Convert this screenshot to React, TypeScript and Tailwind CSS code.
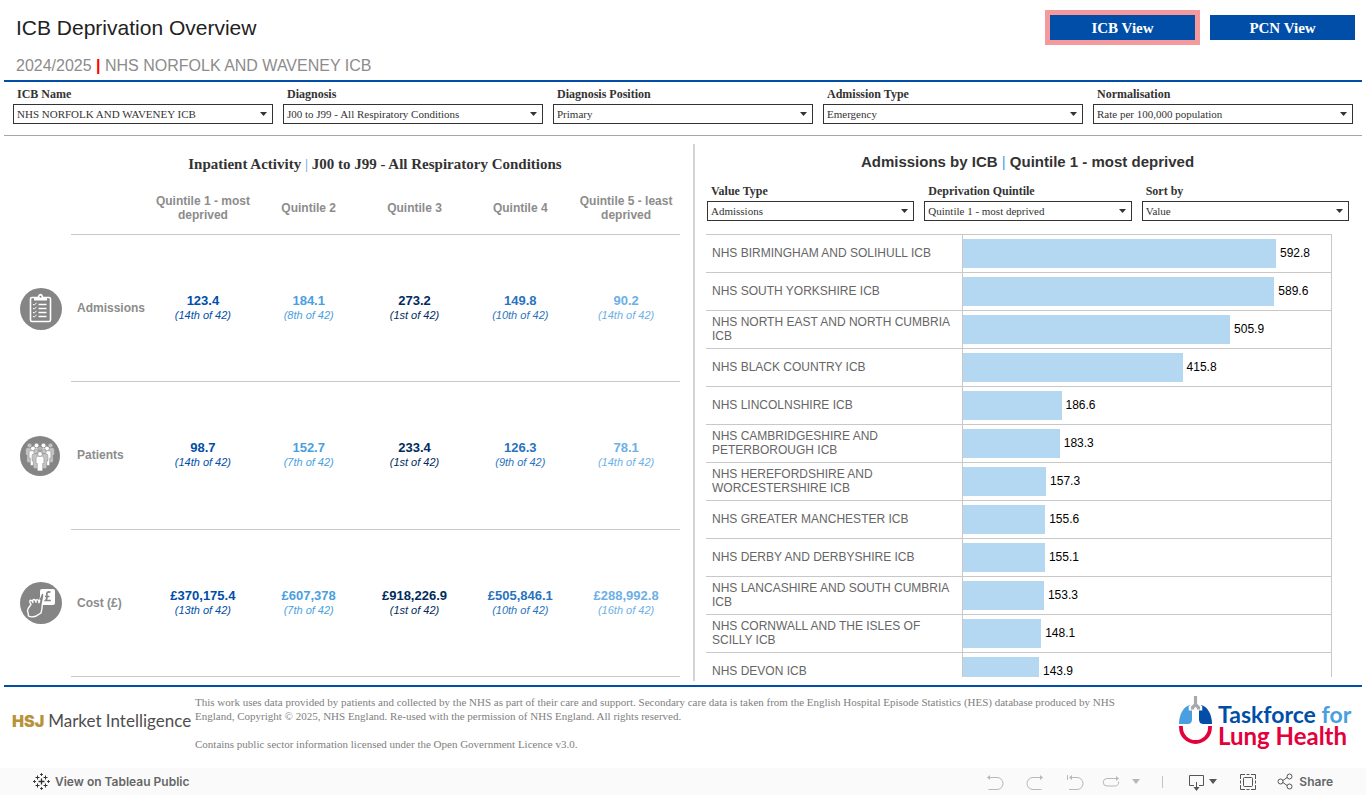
import type { ReactNode } from "react";

const filters = [
  { id: "icb", label: "ICB Name", value: "NHS NORFOLK AND WAVENEY ICB" },
  { id: "diagnosis", label: "Diagnosis", value: "J00 to J99 - All Respiratory Conditions" },
  { id: "position", label: "Diagnosis Position", value: "Primary" },
  { id: "admission", label: "Admission Type", value: "Emergency" },
  { id: "normalisation", label: "Normalisation", value: "Rate per 100,000 population" },
];

const chartFilters = [
  { id: "value-type", label: "Value Type", value: "Admissions" },
  { id: "quintile", label: "Deprivation Quintile", value: "Quintile 1 - most deprived" },
  { id: "sort", label: "Sort by", value: "Value" },
];

const quintiles = [
  "Quintile 1 - most deprived",
  "Quintile 2",
  "Quintile 3",
  "Quintile 4",
  "Quintile 5 - least deprived",
];

const quintileColors = [
  "text-[#004ea8]",
  "text-[#4a9fe0]",
  "text-[#002b5c]",
  "text-[#2a73c0]",
  "text-[#6cb0e6]",
];

const bars = [
  { name: "NHS BIRMINGHAM AND SOLIHULL ICB", value: 592.8 },
  { name: "NHS SOUTH YORKSHIRE ICB", value: 589.6 },
  { name: "NHS NORTH EAST AND NORTH CUMBRIA ICB", value: 505.9 },
  { name: "NHS BLACK COUNTRY ICB", value: 415.8 },
  { name: "NHS LINCOLNSHIRE ICB", value: 186.6 },
  { name: "NHS CAMBRIDGESHIRE AND PETERBOROUGH ICB", value: 183.3 },
  { name: "NHS HEREFORDSHIRE AND WORCESTERSHIRE ICB", value: 157.3 },
  { name: "NHS GREATER MANCHESTER ICB", value: 155.6 },
  { name: "NHS DERBY AND DERBYSHIRE ICB", value: 155.1 },
  { name: "NHS LANCASHIRE AND SOUTH CUMBRIA ICB", value: 153.3 },
  { name: "NHS CORNWALL AND THE ISLES OF SCILLY ICB", value: 148.1 },
  { name: "NHS DEVON ICB", value: 143.9 },
];

const axisMax = 697;

const ClipboardIcon = () => (
  <svg viewBox="0 0 42 42" className="size-[42px]" aria-hidden="true">
    <circle cx="21" cy="21" r="21" fill="#858585" />
    <rect x="10.5" y="9.5" width="20" height="24" rx="1.5" fill="none" stroke="#fff" strokeWidth="1.6" />
    <path d="M14 9.5h3.5c.4-2.200 1.500-3.700 3-3.700s2.600 1.500 3 3.700H27v3H14z" fill="#fff" />
    <circle cx="20.500" cy="8.700" r="1" fill="#858585" />
    <g stroke="#fff" strokeWidth="1.600">
      <path d="M18.500 16.500h8M18.500 20.500h8M18.500 24.500h8M18.500 28.500h8" />
    </g>
    <path
      d="M13 16l1.200 1.200 2.300-2.400M13 20l1.200 1.200 2.300-2.400M13 24l1.200 1.200 2.300-2.400M13 28l1.200 1.200 2.300-2.400"
      fill="none"
      stroke="#fff"
      strokeWidth="1"
    />
  </svg>
);

const Person = ({ x, y, fill }: { x: number; y: number; fill: string }) => (
  <g transform={`translate(${x} ${y})`} fill={fill} stroke="#858585" strokeWidth=".5">
    <path d="M-2 2.200h4c1.200 0 1.900.8 1.900 2v5.300H2.700v6.500c0 .6-.3.900-.9.900h-3.600c-.6 0-.9-.3-.9-.9V9.500h-1.200V4.200c0-1.200.7-2 1.900-2z" />
    <circle cx="0" cy="0" r="2.300" />
  </g>
);

const PatientsIcon = () => (
  <svg viewBox="0 0 42 42" className="size-[42px]" aria-hidden="true">
    <circle cx="20" cy="21" r="20" fill="#858585" />
    <Person x={9.500} y={10.500} fill="#c4c4c4" />
    <Person x={16.500} y={10.500} fill="#fff" />
    <Person x={23.500} y={10.500} fill="#fff" />
    <Person x={30.500} y={10.500} fill="#c4c4c4" />
    <Person x={13} y={13.500} fill="#fff" />
    <Person x={27} y={13.500} fill="#fff" />
    <Person x={20} y={13.500} fill="#b5b5b5" />
    <Person x={16} y={16.500} fill="#c4c4c4" />
    <Person x={24} y={16.500} fill="#c4c4c4" />
    <Person x={20} y={19} fill="#fff" />
  </svg>
);

const CostIcon = () => (
  <svg viewBox="0 0 42 42" className="size-[42px]" aria-hidden="true">
    <circle cx="21" cy="21" r="21" fill="#858585" />
    <rect x="20" y="7" width="15" height="16" rx="2" fill="#fff" />
    <path
      d="M30.500 10.300c-2.300-1.200-4.200.3-3.700 2.600.4 1.800.5 4-1.200 5.600h5.200M25 14.500h4.500"
      fill="none"
      stroke="#858585"
      strokeWidth="1.700"
    />
    <path
      d="M8 30.500c-.8-1-.9-2 .2-4L11 22.300c-1-1.600-2-3.500-.5-4.100 1.200-.4 1.800 1 2.400 2.300-.6-2.200.1-3 1.100-3s1.600 1 2 2.700c-.2-2 .4-2.700 1.300-2.600 1 0 1.500 1.200 1.700 3.100l1.500-5 1.500-2.800c1-1.200 2.300-.5 2 .9l-1.700 8.700c-.1 2.500-.2 5-1.300 8.500l-5.500 3.300c-3 .8-5.700.6-7-.3z"
      fill="#858585"
      stroke="#fff"
      strokeWidth="1.400"
      strokeLinejoin="round"
    />
    <path d="M20.500 17.500l2-5" fill="none" stroke="#858585" strokeWidth="1.500" strokeLinecap="round" />
  </svg>
);

const activity: { label: string; icon: ReactNode; cells: [string, string][] }[] = [
  {
    label: "Admissions",
    icon: <ClipboardIcon />,
    cells: [
      ["123.4", "(14th of 42)"],
      ["184.1", "(8th of 42)"],
      ["273.2", "(1st of 42)"],
      ["149.8", "(10th of 42)"],
      ["90.2", "(14th of 42)"],
    ],
  },
  {
    label: "Patients",
    icon: <PatientsIcon />,
    cells: [
      ["98.7", "(14th of 42)"],
      ["152.7", "(7th of 42)"],
      ["233.4", "(1st of 42)"],
      ["126.3", "(9th of 42)"],
      ["78.1", "(14th of 42)"],
    ],
  },
  {
    label: "Cost (£)",
    icon: <CostIcon />,
    cells: [
      ["£370,175.4", "(13th of 42)"],
      ["£607,378", "(7th of 42)"],
      ["£918,226.9", "(1st of 42)"],
      ["£505,846.1", "(10th of 42)"],
      ["£288,992.8", "(16th of 42)"],
    ],
  },
];

const Filter = ({ id, label, value }: { id: string; label: string; value: string }) => (
  <div className="flex flex-1 flex-col font-['Liberation_Serif',serif] text-[#333]">
    <label htmlFor={id} className="h-5 pl-1 text-xs leading-5 font-bold">
      {label}
    </label>
    <div className="relative">
      <select
        id={id}
        className="block h-5 w-full appearance-none border border-[#333] bg-white pr-5 pl-[3px] text-[11px] leading-4"
      >
        <option>{value}</option>
      </select>
      <svg viewBox="0 0 7 4" className="pointer-events-none absolute top-2 right-[6px] h-1 w-[7px]" aria-hidden="true">
        <path d="M0 0h7L3.500 4z" fill="#333" />
      </svg>
    </div>
  </div>
);

const TableauIcon = () => (
  <svg viewBox="0 0 17 17" className="size-[17px]" fill="none" stroke="#333" aria-hidden="true">
    <path d="M8.500 5.500v6M5.500 8.500h6" strokeWidth="1.300" />
    <path d="M4.500 2.500v4M2.500 4.500h4M12.500 2.500v4M10.500 4.500h4M4.500 10.500v4M2.500 12.500h4M12.500 10.500v4M10.500 12.500h4" />
    <path d="M8.500 0v3M7 1.500h3M8.500 14v3M7 15.500h3M0 8.500h3M1.500 7v3M14 8.500h3M15.500 7v3" strokeWidth=".9" />
  </svg>
);

const LungLogo = () => (
  <svg viewBox="0 0 34 54" className="h-[54px] w-[34px]" fill="none" aria-hidden="true">
    <path d="M11 10C5 11 0 19 0 29h8.500c2.800 0 4.500-1.500 4.500-4.500V12c0-1.300-.7-2.200-2-2z" fill="#4a9fe0" />
    <path d="M22 10c6 1 11 9 11 19h-8.500c-2.800 0-4.500-1.500-4.500-4.500V12c0-1.300.7-2.200 2-2z" fill="#004ea8" />
    <path d="M16.500 1v8M12.500 15.500v-3l4-3 4 3v3" stroke="#fff" strokeWidth="5.500" />
    <path d="M16.500 1v9M13.500 14.500v-2l3-3 3 3v2" stroke="#a7a9ac" strokeWidth="3.200" />
    <path d="M2 31v1.500a14.500 14.500 0 0 0 29 0V31" stroke="#e4003b" strokeWidth="3.800" />
  </svg>
);

const App = () => {
  return (
    <div className="flex h-screen flex-col bg-white font-['Liberation_Sans',Arial,sans-serif]">
      <header className="mx-1 flex h-[82px] shrink-0 justify-between border-b-2 border-[#004ea8] pr-[7px] pl-3">
        <div className="flex flex-col">
          <h1 className="pt-3 text-[21px] leading-8 text-[#222]">ICB Deprivation Overview</h1>
          <p className="pt-3 text-base leading-5 text-[#8c8c8c]">
            2024/2025 <span className="font-bold text-[#f00]">|</span> NHS NORFOLK AND WAVENEY ICB
          </p>
        </div>
        <nav className="flex items-start gap-[10px] pt-[10px] font-['Liberation_Serif',serif] text-[15px] font-bold text-white">
          <button className="h-[35px] w-[155px] border-5 border-[#f49a9c] bg-[#004ea8] pt-[2px]">ICB View</button>
          <button className="mt-[5px] h-[25px] w-[145px] bg-[#004ea8] pt-[2px]">PCN View</button>
        </nav>
      </header>

      <section className="mx-1 flex h-[54px] shrink-0 gap-[10px] border-b border-[#a6a6a6] px-[9px] pt-[2px]">
        {filters.map((f) => (
          <Filter key={f.id} {...f} />
        ))}
      </section>

      <main className="flex min-h-0 flex-1 pt-2 pb-1">
        <section className="flex w-[693px] grow flex-col pr-[13px] pb-1">
          <h2 className="h-[39px] pt-[10px] pl-[70px] text-center font-['Liberation_Serif',serif] text-[15px] leading-5 font-bold text-[#333]">
            Inpatient Activity <span className="font-normal text-[#4a9fe0]">|</span> J00 to J99 - All Respiratory
            Conditions
          </h2>
          <table className="w-full flex-1 table-fixed border-separate border-spacing-0">
            <colgroup>
              <col className="w-[71px]" />
              <col className="w-[80px]" />
              <col />
              <col />
              <col />
              <col />
              <col />
            </colgroup>
            <thead>
              <tr className="h-[52px] text-xs leading-[14px] text-[#8c8c8c]">
                <td />
                <td className="border-b border-[#c8c8c8]" />
                {quintiles.map((q) => (
                  <th key={q} scope="col" className="border-b border-[#c8c8c8] pr-[6px] pb-[2px] pl-1 font-bold">
                    {q}
                  </th>
                ))}
              </tr>
            </thead>
            <tbody>
              {activity.map((row) => (
                <tr key={row.label}>
                  <td className="pl-5">{row.icon}</td>
                  <th scope="row" className="border-b border-[#c8c8c8] pl-[6px] text-left text-xs text-[#8c8c8c]">
                    {row.label}
                  </th>
                  {row.cells.map(([value, rank], i) => (
                    <td key={i} className={`border-b border-[#c8c8c8] pr-[2px] text-center ${quintileColors[i]}`}>
                      <div className="text-[13px] leading-[14px] font-bold">{value}</div>
                      <div className="text-[11px] leading-[14px] italic">{rank}</div>
                    </td>
                  ))}
                </tr>
              ))}
            </tbody>
          </table>
        </section>

        <section className="flex w-[673px] grow flex-col border-l-2 border-[#d4d4d4] pr-[17px] pl-[11px]">
          <h2 className="h-9 pt-2 text-center text-[15px] leading-5 font-bold text-[#333]">
            Admissions by ICB <span className="font-normal text-[#4a9fe0]">|</span> Quintile 1 - most deprived
          </h2>
          <div className="flex gap-[10px] pt-[1px] pl-[1px]">
            {chartFilters.map((f) => (
              <Filter key={f.id} {...f} />
            ))}
          </div>
          <div className="mt-[13px] mr-[17px] mb-1 min-h-0 flex-1 overflow-hidden border-r border-[#c8c8c8]">
            {bars.map((b) => (
              <div key={b.name} className="flex h-[38px] border-t border-[#c8c8c8]">
                <div className="flex w-[257px] shrink-0 items-center border-r border-[#c8c8c8] pr-2 pb-[2px] pl-[6px] text-xs leading-[14px] text-[#666]">
                  {b.name}
                </div>
                <div className="flex flex-1 items-center">
                  <div className="h-[29px] shrink-0 bg-[#b4d8f1]" style={{ width: `${(b.value / axisMax) * 100}%` }} />
                  <span className="pb-[2px] pl-1 text-xs text-black">{b.value}</span>
                </div>
              </div>
            ))}
          </div>
        </section>
      </main>

      <footer className="mx-1 flex h-[83px] shrink-0 border-t-2 border-[#004ea8] pl-2">
        <div className="flex w-[183px] shrink-0 items-baseline gap-1 pt-5 leading-7">
          <span className="font-['Inter',sans-serif] text-base font-black text-[#b8923a]">HSJ</span>
          <span className="font-['Lato',sans-serif] text-[17px] whitespace-nowrap text-[#4d4d4f]">
            Market Intelligence
          </span>
        </div>
        <div className="flex-1 pt-2 font-['Liberation_Serif',serif] text-[11px] leading-[14px] text-[#808080]">
          <p>
            This work uses data provided by patients and collected by the NHS as part of their care and support. Secondary
            care data is taken from the English Hospital Episode Statistics (HES) database produced by NHS
            <br />
            England, Copyright © 2025, NHS England. Re-used with the permission of NHS England. All rights reserved.
          </p>
          <p className="pt-[14px]">Contains public sector information licensed under the Open Government Licence v3.0.</p>
        </div>
        <div className="flex w-[187px] shrink-0 gap-[5px] pt-2 pl-1">
          <LungLogo />
          <div className="pt-2 font-['Lato',sans-serif] text-[23px] leading-[22px] font-bold whitespace-nowrap">
            <div className="text-[#004ea8]">
              Taskforce <span className="text-[#4a9fe0]">for</span>
            </div>
            <div className="text-[24px] text-[#e4003b]">Lung Health</div>
          </div>
        </div>
      </footer>

      <div className="flex h-[27px] shrink-0 items-center justify-between bg-[#fafafa] px-[33px] font-['Inter',sans-serif] text-xs font-semibold text-[#666]">
        <a href="#" className="flex items-center gap-[5px]">
          <TableauIcon />
          View on Tableau Public
        </a>
        <div className="flex items-center">
          <button aria-label="Undo" disabled className="w-10">
            <svg viewBox="0 0 18 18" className="size-[18px]" fill="none" stroke="#b8b8b8">
              <path d="M2 4.500h9a6 6 0 0 1 0 12H2.500" />
              <path d="M1 4.500L4 2v5z" fill="#b8b8b8" stroke="none" />
            </svg>
          </button>
          <button aria-label="Redo" disabled className="w-10">
            <svg viewBox="0 0 18 18" className="size-[18px]" fill="none" stroke="#b8b8b8">
              <path d="M16 4.500H7a6 6 0 0 0 0 12h8.500" />
              <path d="M17 4.500L14 2v5z" fill="#b8b8b8" stroke="none" />
            </svg>
          </button>
          <button aria-label="Revert" disabled className="w-9">
            <svg viewBox="0 0 18 18" className="size-[18px]" fill="none" stroke="#b8b8b8">
              <path d="M4 4.500h7a6 6 0 0 1 0 12H3M1.500 2v5" />
              <path d="M3 4.500L6 2v5z" fill="#b8b8b8" stroke="none" />
            </svg>
          </button>
          <button aria-label="Refresh" disabled className="flex w-[60px] items-center gap-3">
            <svg viewBox="0 0 18 18" className="size-[18px]" fill="none" stroke="#b8b8b8">
              <path d="M15 5.500H5a3.500 3.500 0 0 0 0 7.500h8a3.500 3.500 0 0 0 3.500-4.500" />
              <path d="M17 5.500L14 3v5z" fill="#b8b8b8" stroke="none" />
            </svg>
            <svg viewBox="0 0 8 5" className="h-[5px] w-2" fill="#b8b8b8">
              <path d="M0 0h8L4 5z" />
            </svg>
          </button>
          <span className="mr-[25px] h-3 w-px bg-[#c4c4c4]" />
          <button aria-label="Download" className="flex w-[51px] items-center gap-1">
            <svg viewBox="0 0 17 18" className="h-[18px] w-[17px]" fill="none" stroke="#555">
              <path d="M6 12.500H1.500v-10h14v10H11M8.500 9V16" />
              <path d="M5.500 14h6l-3 4z" fill="#555" stroke="none" />
            </svg>
            <svg viewBox="0 0 8 5" className="h-[5px] w-2" fill="#555">
              <path d="M0 0h8L4 5z" />
            </svg>
          </button>
          <button aria-label="Full screen" className="w-[38px]">
            <svg viewBox="0 0 18 18" className="size-[18px]" fill="none" stroke="#555">
              <path d="M1.500 6V1.500H6M7.500 1.500h3M12 1.500h4.500V6M16.500 7.500v3M16.500 12v4.500H12M10.500 16.500h-3M6 16.500H1.500V12M1.500 10.500v-3" />
              <rect x="4.500" y="4.500" width="9" height="9" rx="1" />
            </svg>
          </button>
          <button className="flex items-center gap-[6px]">
            <svg viewBox="0 0 16 17" className="h-[17px] w-4" fill="none" stroke="#555">
              <circle cx="3.500" cy="8.500" r="2.500" />
              <circle cx="12.500" cy="3.500" r="2.500" />
              <circle cx="12.500" cy="13.500" r="2.500" />
              <path d="M6 7.500l4-3M6 9.500l4 3" />
            </svg>
            Share
          </button>
        </div>
      </div>
    </div>
  );
};

export default App;
